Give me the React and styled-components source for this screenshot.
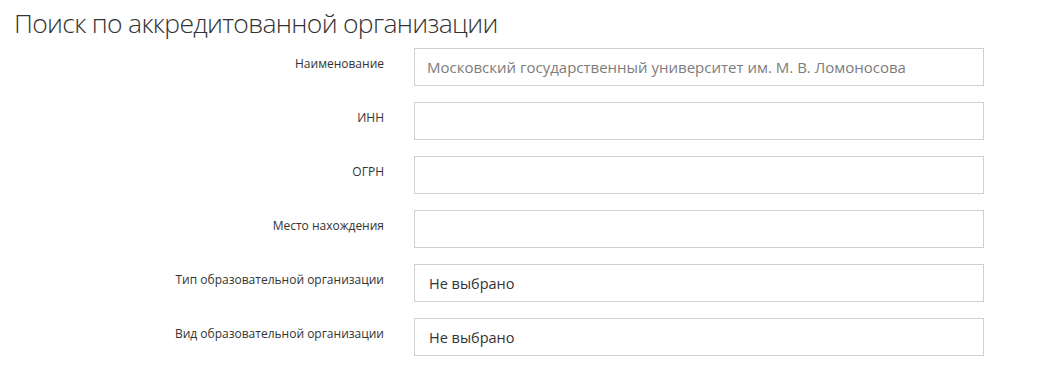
import React from 'react';
import styled, { createGlobalStyle } from 'styled-components';

const GlobalStyle = createGlobalStyle`
  body {
    margin: 0;
    background: #fff;
    font-family: "Open Sans", "Liberation Sans", sans-serif;
    color: #333;
  }
`;

const Page = styled.div`
  width: 1064px;
  height: 368px;
  overflow: hidden;
`;

const Title = styled.h1`
  margin: 0 0 6px 0;
  padding: 4px 0 0 14px;
  font-size: 26.5px;
  font-weight: 300;
  letter-spacing: -0.7px;
  line-height: 38px;
  color: #333;
`;

const Form = styled.form`
  display: grid;
  grid-template-columns: 384px 570px;
  column-gap: 30px;
  row-gap: 16px;
`;

const Label = styled.label`
  text-align: right;
  font-size: 12px;
  line-height: 16px;
  padding-top: 8px;
  color: #333;
`;

const Field = styled.input`
  box-sizing: border-box;
  width: 570px;
  height: 38px;
  margin: 0;
  padding: 0 12px;
  border: 1px solid #d0d0d0;
  border-radius: 0;
  background: #fff;
  font-family: "Open Sans", "Liberation Sans", sans-serif;
  font-size: 15px;
  color: #333;
  outline: none;
  &::placeholder {
    color: #7c7c7c;
  }
`;

const Select = styled.select`
  box-sizing: border-box;
  width: 570px;
  height: 38px;
  margin: 0;
  padding: 0 14px;
  border: 1px solid #d0d0d0;
  border-radius: 0;
  background: #fff;
  appearance: none;
  font-family: "Open Sans", "Liberation Sans", sans-serif;
  font-size: 14.5px;
  color: #333;
  outline: none;
`;

const fields = [
  { label: 'Наименование', placeholder: 'Московский государственный университет им. М. В. Ломоносова' },
  { label: 'ИНН' },
  { label: 'ОГРН' },
  { label: 'Место нахождения' },
];

const selects = ['Тип образовательной организации', 'Вид образовательной организации'];

export default function App() {
  return (
    <Page>
      <GlobalStyle />
      <Title>Поиск по аккредитованной организации</Title>
      <Form>
        {fields.map((f) => (
          <React.Fragment key={f.label}>
            <Label>{f.label}</Label>
            <Field type="text" placeholder={f.placeholder || ''} />
          </React.Fragment>
        ))}
        {selects.map((s) => (
          <React.Fragment key={s}>
            <Label>{s}</Label>
            <Select defaultValue="">
              <option value="">Не выбрано</option>
            </Select>
          </React.Fragment>
        ))}
      </Form>
    </Page>
  );
}
